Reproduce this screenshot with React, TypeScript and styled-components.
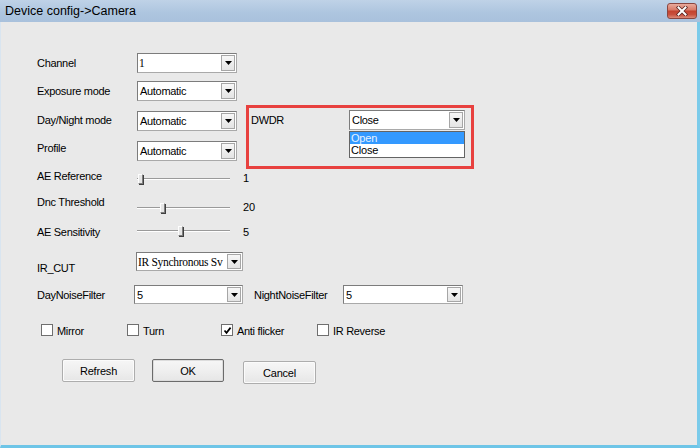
import React from "react";
import styled, { createGlobalStyle } from "styled-components";

const GlobalStyle = createGlobalStyle`
  html, body {
    margin: 0;
    padding: 0;
    background: #e9e9e9;
  }
  body {
    font-family: "Liberation Sans", Arial, sans-serif;
    color: #000;
  }
`;

/* shifts an item inside a centred flex row by dy pixels without leaving the flow */
const nudge = (dy?: number) =>
  !dy ? "" : dy > 0 ? `margin-top: ${dy * 2}px;` : `margin-bottom: ${-dy * 2}px;`;

const Window = styled.div`
  width: 700px;
  height: 448px;
  display: flex;
  flex-direction: column;
  overflow: hidden;
`;

const TitleBar = styled.div`
  height: 22px;
  flex: none;
  box-sizing: border-box;
  display: flex;
  align-items: center;
  justify-content: space-between;
  padding: 0 3px 0 5px;
  background: linear-gradient(#bfd2e7 0%, #adc5df 60%, #a9c1dc 100%);
`;

const Title = styled.span`
  font-size: 12.5px;
  color: #000;
  white-space: nowrap;
`;

const CloseButton = styled.div`
  width: 30px;
  height: 16px;
  box-sizing: border-box;
  border: 1px solid #8a4640;
  border-radius: 3px;
  background: linear-gradient(#e9aa9c 0%, #d97c6a 40%, #c4432f 52%, #c9503d 75%, #dc8a78 100%);
  display: flex;
  align-items: center;
  justify-content: center;
`;

const Body = styled.div`
  flex: 1;
  box-sizing: border-box;
  background: #e9e9e9;
  border-left: 1px solid #d9e5f0;
  border-right: 3px solid #7bcbea;
  border-bottom: 3px solid #6ec5e7;
  padding: 31px 0 0 36px;
  display: flex;
  flex-direction: column;
`;

const Row = styled.div<{ $mt: number; $h: number }>`
  flex: none;
  display: flex;
  align-items: center;
  height: ${(p) => p.$h}px;
  margin-top: ${(p) => p.$mt}px;
`;

const Label = styled.span<{ $w: number; $dy?: number; $ml?: number }>`
  flex: none;
  width: ${(p) => p.$w}px;
  margin-left: ${(p) => p.$ml ?? 0}px;
  font-size: 11px;
  letter-spacing: -0.3px;
  white-space: nowrap;
  ${(p) => nudge(p.$dy)}
`;

const Split = styled.div`
  flex: none;
  height: 50px;
  margin-top: 10px;
  display: flex;
  align-items: flex-start;
`;

const Column = styled.div`
  display: flex;
  flex-direction: column;
`;

const Highlight = styled.div`
  flex: none;
  width: 228px;
  height: 64px;
  margin: -6px 0 0 9px;
  box-sizing: border-box;
  border: 3px solid #e8413f;
  padding: 2px 0 0 2px;
  display: flex;
  align-items: flex-start;
`;

const GroupLabel = styled.span`
  flex: none;
  width: 98px;
  margin-top: 4px;
  font-size: 11px;
  letter-spacing: -0.3px;
`;

const Combo = styled.div<{ $w: number; $h: number; $ml?: number }>`
  flex: none;
  position: relative;
  width: ${(p) => p.$w}px;
  height: ${(p) => p.$h}px;
  margin-left: ${(p) => p.$ml ?? 0}px;
  box-sizing: border-box;
  border: 1px solid #7c7c7c;
  border-right-color: #a9a9a9;
  border-bottom-color: #a9a9a9;
  background: #fff;
  display: flex;
  align-items: stretch;
`;

const ComboValue = styled.span<{ $serif?: boolean }>`
  flex: 1;
  min-width: 0;
  overflow: hidden;
  white-space: nowrap;
  display: flex;
  align-items: center;
  padding-left: ${(p) => (p.$serif ? 1 : 2)}px;
  font-family: ${(p) =>
    p.$serif ? `"Liberation Serif", "Times New Roman", serif` : `"Liberation Sans", Arial, sans-serif`};
  font-size: ${(p) => (p.$serif ? 11.5 : 11)}px;
  letter-spacing: -0.3px;
`;

const DropButton = styled.span`
  flex: none;
  width: 14px;
  margin: 1px;
  box-sizing: border-box;
  border: 1px solid #a6a6a6;
  background: linear-gradient(#f7f7f7, #e4e4e4);
  display: flex;
  align-items: center;
  justify-content: center;
`;

const DropList = styled.div`
  position: absolute;
  left: -1px;
  top: calc(100% + 2px);
  width: 116px;
  box-sizing: border-box;
  border: 1px solid #646464;
  background: #fff;
  display: flex;
  flex-direction: column;
  z-index: 2;
`;

const DropItem = styled.div<{ $active?: boolean }>`
  height: 12px;
  line-height: 12px;
  padding-left: 1px;
  font-size: 11px;
  letter-spacing: -0.2px;
  background: ${(p) => (p.$active ? "#3399ff" : "#fff")};
  color: ${(p) => (p.$active ? "#e6f2ff" : "#000")};
  & + & {
    height: 13px;
    line-height: 13px;
  }
`;

const SliderTrack = styled.div<{ $dy?: number }>`
  flex: none;
  position: relative;
  width: 93px;
  height: 12px;
  ${(p) => nudge(p.$dy)}
  &::before {
    content: "";
    position: absolute;
    left: 0;
    right: 0;
    top: 5px;
    height: 2px;
    background: linear-gradient(#9a9a9a 50%, #ffffff 50%);
  }
`;

const Thumb = styled.div`
  position: absolute;
  top: 1px;
  width: 5px;
  height: 10px;
  box-sizing: border-box;
  border: 1px solid #7e7e7e;
  border-left-color: #fdfdfd;
  border-top-color: #fdfdfd;
  background: #e6e6e6;
  box-shadow: 1px 1px 0 #3f3f3f;
`;

const SliderValue = styled.span<{ $dy?: number }>`
  margin-left: 13px;
  font-size: 11px;
  ${(p) => nudge(p.$dy)}
`;

const CheckRow = styled.div`
  flex: none;
  height: 14px;
  margin-top: 19px;
  padding-left: 4px;
  display: flex;
  align-items: center;
`;

const CheckItem = styled.label<{ $w?: number }>`
  flex: none;
  width: ${(p) => (p.$w ? `${p.$w}px` : "auto")};
  display: flex;
  align-items: center;
  gap: 4px;
  font-size: 11px;
  letter-spacing: -0.3px;
`;

const Box = styled.span`
  flex: none;
  width: 12px;
  height: 12px;
  box-sizing: border-box;
  border: 1px solid #6f6f6f;
  background: #fff;
  display: flex;
  align-items: center;
  justify-content: center;
`;

const CheckText = styled.span`
  margin-top: 2px;
`;

const ButtonRow = styled.div`
  flex: none;
  margin-top: 22px;
  padding-left: 25px;
  display: flex;
  align-items: flex-start;
`;

const PushButton = styled.div<{ $w: number; $ml?: number; $mt?: number; $default?: boolean }>`
  flex: none;
  width: ${(p) => p.$w}px;
  height: 23px;
  margin-left: ${(p) => p.$ml ?? 0}px;
  margin-top: ${(p) => p.$mt ?? 0}px;
  box-sizing: border-box;
  border: 1px solid ${(p) => (p.$default ? "#6b6b6b" : "#adadad")};
  border-radius: 2px;
  background: linear-gradient(#f6f6f6 0%, #efefef 50%, #e6e6e6 100%);
  box-shadow: inset 0 0 0 1px ${(p) => (p.$default ? "#dcdcdc" : "#fbfbfb")};
  display: flex;
  align-items: center;
  justify-content: center;
  font-size: 11px;
  letter-spacing: -0.2px;
`;

const Arrow = () => (
  <svg width="7" height="4" viewBox="0 0 7 4">
    <polygon points="0,0 7,0 3.5,4" fill="#000" />
  </svg>
);

const Tick = () => (
  <svg width="9" height="9" viewBox="0 0 9 9">
    <path d="M1.5 4.5 L3.5 6.8 L7.6 1.6" fill="none" stroke="#000" strokeWidth="1.7" />
  </svg>
);

const CloseGlyph = () => (
  <svg width="12" height="10" viewBox="0 0 12 10">
    <path d="M2.5 1.5 L9.5 8.5 M9.5 1.5 L2.5 8.5" stroke="#5a2420" strokeWidth="3.6" strokeLinecap="square" />
    <path d="M2.5 1.5 L9.5 8.5 M9.5 1.5 L2.5 8.5" stroke="#ffffff" strokeWidth="2" strokeLinecap="square" />
  </svg>
);

type ComboProps = {
  value: string;
  w: number;
  h?: number;
  ml?: number;
  serif?: boolean;
  children?: React.ReactNode;
};

const ComboBox = ({ value, w, h = 20, ml, serif, children }: ComboProps) => (
  <Combo $w={w} $h={h} $ml={ml}>
    <ComboValue $serif={serif}>{value}</ComboValue>
    <DropButton>
      <Arrow />
    </DropButton>
    {children}
  </Combo>
);

type SliderProps = { label: string; value: number; min: number; max: number; mt: number; dy: [number, number, number] };

const SliderRow = ({ label, value, min, max, mt, dy }: SliderProps) => {
  const travel = 93 - 5;
  const left = Math.round(((value - min) / (max - min)) * travel) + 1;
  return (
    <Row $mt={mt} $h={20}>
      <Label $w={100} $dy={dy[0]}>
        {label}
      </Label>
      <SliderTrack $dy={dy[1]}>
        <Thumb style={{ left }} />
      </SliderTrack>
      <SliderValue $dy={dy[2]}>{value}</SliderValue>
    </Row>
  );
};

const Check = ({ label, checked, w }: { label: string; checked?: boolean; w?: number }) => (
  <CheckItem $w={w}>
    <Box>{checked && <Tick />}</Box>
    <CheckText>{label}</CheckText>
  </CheckItem>
);

export default function App() {
  return (
    <>
      <GlobalStyle />
      <Window>
        <TitleBar>
          <Title>Device config-&gt;Camera</Title>
          <CloseButton>
            <CloseGlyph />
          </CloseButton>
        </TitleBar>
        <Body>
          <Row $mt={0} $h={20}>
            <Label $w={100}>Channel</Label>
            <ComboBox value="1" w={100} serif />
          </Row>
          <Row $mt={8} $h={20}>
            <Label $w={100}>Exposure mode</Label>
            <ComboBox value="Automatic" w={100} />
          </Row>
          <Split>
            <Column>
              <Row $mt={0} $h={20}>
                <Label $w={100} $dy={-1}>
                  Day/Night mode
                </Label>
                <ComboBox value="Automatic" w={100} />
              </Row>
              <Row $mt={10} $h={20}>
                <Label $w={100} $dy={-3}>
                  Profile
                </Label>
                <ComboBox value="Automatic" w={100} />
              </Row>
            </Column>
            <Highlight>
              <GroupLabel>DWDR</GroupLabel>
              <ComboBox value="Close" w={116} h={20}>
                <DropList>
                  <DropItem $active>Open</DropItem>
                  <DropItem>Close</DropItem>
                </DropList>
              </ComboBox>
            </Highlight>
          </Split>
          <SliderRow label="AE Reference" value={1} min={1} max={100} mt={6} dy={[-1, 2, 1]} />
          <SliderRow label="Dnc Threshold" value={20} min={0} max={80} mt={8} dy={[-3, 3, 2]} />
          <SliderRow label="AE Sensitivity" value={5} min={0} max={11} mt={7} dy={[0, -1, 0]} />
          <Row $mt={10} $h={19}>
            <Label $w={99} $dy={6}>
              IR_CUT
            </Label>
            <ComboBox value="IR Synchronous Sv" w={107} h={19} serif />
          </Row>
          <Row $mt={14} $h={19}>
            <Label $w={97}>DayNoiseFilter</Label>
            <ComboBox value="5" w={109} h={19} />
            <Label $w={89} $ml={11}>
              NightNoiseFilter
            </Label>
            <ComboBox value="5" w={120} h={19} />
          </Row>
          <CheckRow>
            <Check label="Mirror" w={86} />
            <Check label="Turn" w={94} />
            <Check label="Anti flicker" checked w={96} />
            <Check label="IR Reverse" />
          </CheckRow>
          <ButtonRow>
            <PushButton $w={73}>Refresh</PushButton>
            <PushButton $w={72} $ml={17} $default>
              OK
            </PushButton>
            <PushButton $w={73} $ml={19} $mt={2}>
              Cancel
            </PushButton>
          </ButtonRow>
        </Body>
      </Window>
    </>
  );
}
